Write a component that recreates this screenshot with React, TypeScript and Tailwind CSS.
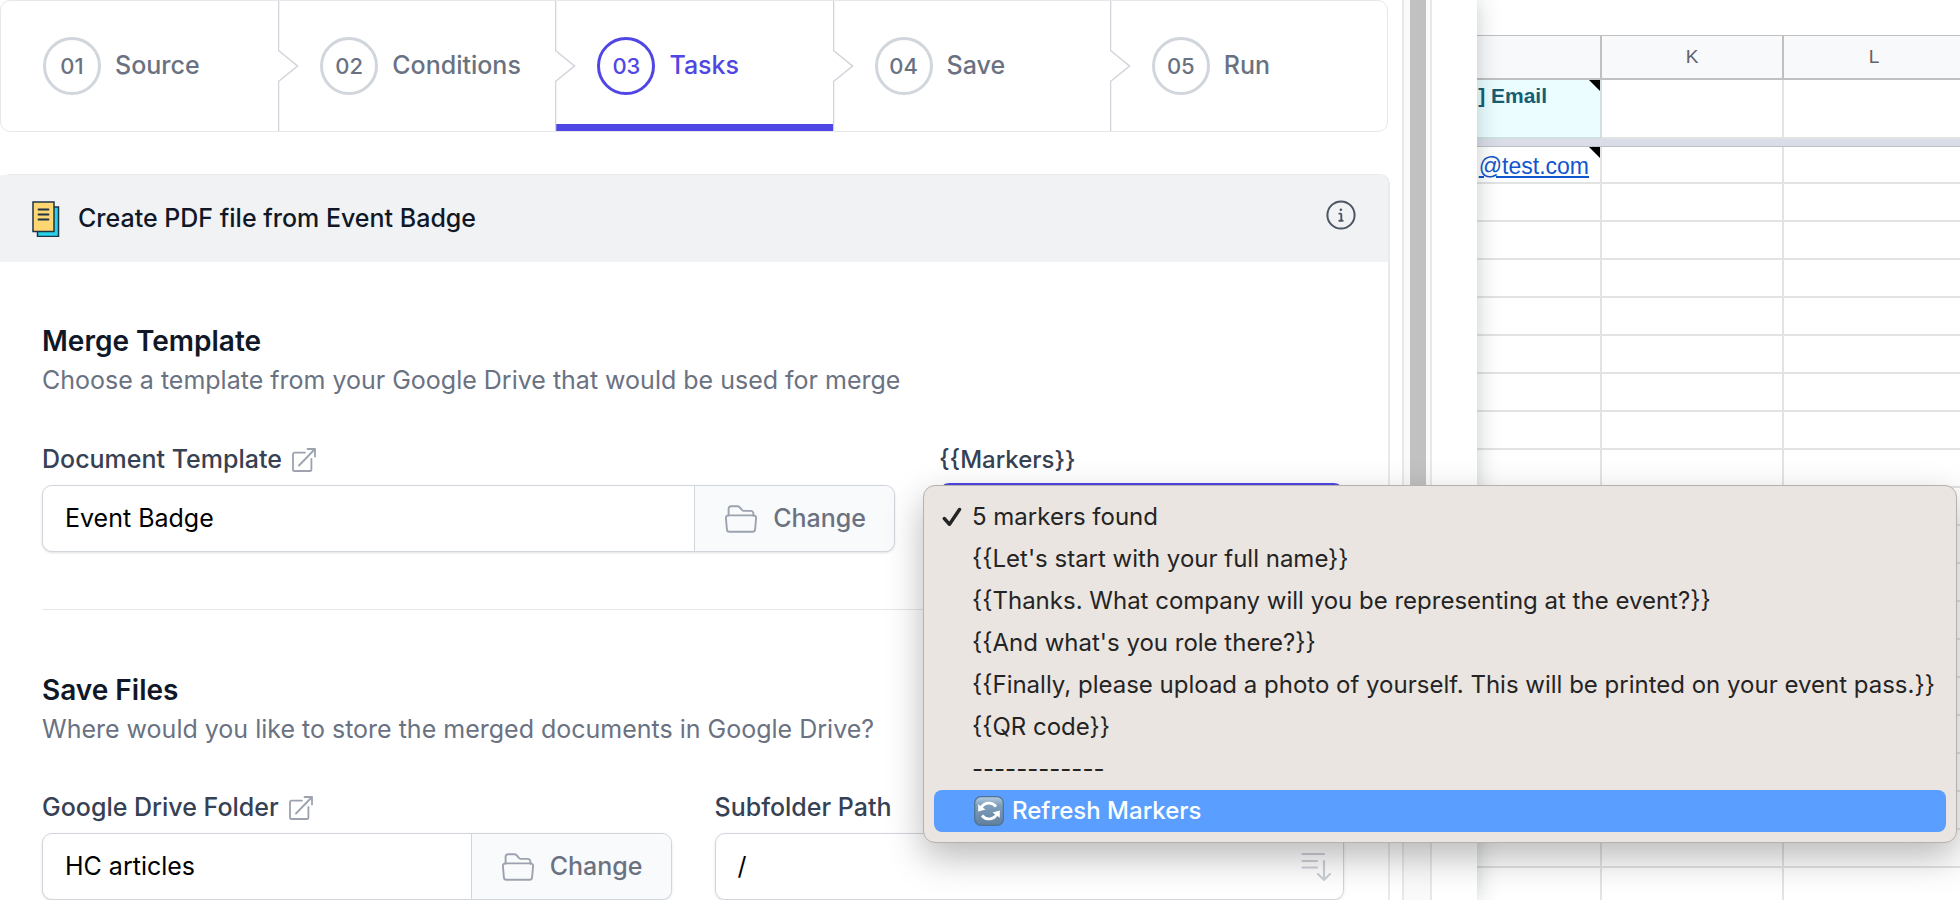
import React from 'react';

const steps = [
  { id: '01', name: 'Source' },
  { id: '02', name: 'Conditions' },
  { id: '03', name: 'Tasks', current: true },
  { id: '04', name: 'Save' },
  { id: '05', name: 'Run' },
];

const markers = [
  '5 markers found',
  "{{Let's start with your full name}}",
  '{{Thanks. What company will you be representing at the event?}}',
  "{{And what's you role there?}}",
  '{{Finally, please upload a photo of yourself. This will be printed on your event pass.}}',
  '{{QR code}}',
  '------------',
];

const emptyRows = Array.from({ length: 20 }, (_, i) => i);

/* Icons */

const DocumentIcon = () => (
  <svg className="h-9 w-7" viewBox="0 0 28 36" fill="none" stroke="#1f3347" strokeWidth="1.5" aria-hidden="true">
    <rect x="5.5" y="6" width="21" height="29.5" fill="#26d3ea" />
    <rect x="1" y="1" width="21" height="29.5" fill="#ffd772" />
    <path d="M6.5 8.5h10M6.5 13.5h10M6.5 18.5h10" strokeLinecap="round" strokeWidth="1.8" />
  </svg>
);

const InfoIcon = () => (
  <svg className="h-[30px] w-[30px]" viewBox="0 0 30 30" fill="none" stroke="#4b5563" aria-hidden="true">
    <circle cx="15" cy="15" r="13.6" strokeWidth="2" />
    <path d="M13.3 13.6h1.3c.4 0 .7.3.7.7v5c0 1 .5 1.5 1.4 1.5M13.3 20.8h3.4" strokeWidth="1.9" strokeLinecap="round" />
    <circle cx="14.9" cy="9.7" r="1.3" fill="#4b5563" stroke="none" />
  </svg>
);

const ExternalIcon = () => (
  <svg className="h-6 w-6" viewBox="0 0 24 24" fill="none" stroke="#9ca3af" strokeWidth="1.8" strokeLinecap="round" strokeLinejoin="round" aria-hidden="true">
    <path d="M13 4.6H2.6A1.6 1.6 0 0 0 1 6.2v15.2A1.6 1.6 0 0 0 2.6 23h15.2a1.6 1.6 0 0 0 1.6-1.6V11" />
    <path d="M15.5 1H23v7.5M23 1 7 17.5" />
  </svg>
);

const FolderIcon = () => (
  <svg className="h-7 w-8" viewBox="0 0 32 28" fill="none" stroke="#9ca3af" strokeWidth="1.9" strokeLinecap="round" strokeLinejoin="round" aria-hidden="true">
    <path d="M3.6 10.6V3.8A2.6 2.6 0 0 1 6.2 1.2h6.3c.8 0 1.5.3 2 .9l2.6 3c.5.5 1 .8 1.7.8h7a2.6 2.6 0 0 1 2.6 2.6v2.2" />
    <path d="M3.4 10.4h25.2c1.5 0 2.6 1.2 2.5 2.6l-1 11.4a2.6 2.6 0 0 1-2.6 2.4h-23a2.6 2.6 0 0 1-2.6-2.4L.9 13c-.1-1.4 1-2.6 2.5-2.6Z" />
  </svg>
);

const SortIcon = () => (
  <svg className="h-[30px] w-[30px]" viewBox="0 0 30 30" fill="none" stroke="#cdd0d7" strokeWidth="2.2" strokeLinecap="round" strokeLinejoin="round" aria-hidden="true">
    <path d="M1.5 2H23M1.5 9H16M1.5 15.5H16M23 9v18.5M17 22l6 6 6-6" />
  </svg>
);

const CheckIcon = () => (
  <svg className="h-5 w-5" viewBox="0 0 20 20" fill="none" stroke="#242424" strokeWidth="3.4" strokeLinecap="round" strokeLinejoin="round" aria-hidden="true">
    <path d="M2.3 11.5 7.5 17.3 17.5 2.5" />
  </svg>
);

const RefreshIcon = () => (
  <svg className="h-[30px] w-[30px]" viewBox="0 0 30 30" fill="none" aria-hidden="true">
    <defs>
      <linearGradient id="refresh-face" x1="0" y1="0" x2="0" y2="1">
        <stop offset="0" stopColor="#b4cde2" />
        <stop offset="0.3" stopColor="#7f9fbc" />
        <stop offset="1" stopColor="#5f7f9c" />
      </linearGradient>
    </defs>
    <rect x="0.7" y="0.7" width="28.6" height="28.6" rx="6" fill="url(#refresh-face)" stroke="#4f7394" strokeWidth="1.2" />
    <path d="M7 12.5C9.2 6.6 17.5 5 22 10.5M23 17.5C20.8 23.4 12.5 25 8 19.5" stroke="#fff" strokeWidth="2.8" />
    <path d="M4.2 8.2V15.5L11.5 13.5ZM25.8 21.8V14.5L18.5 16.5Z" fill="#fff" />
  </svg>
);

const NoteCorner = () => (
  <svg className="absolute top-0 right-0 h-[11px] w-[11px]" viewBox="0 0 11 11" aria-hidden="true">
    <path d="M0 0h11v11Z" fill="#000" />
  </svg>
);

/* Form parts */

interface SectionTitleProps {
  title: string;
  hint: string;
}

const SectionTitle: React.FC<SectionTitleProps> = ({ title, hint }) => (
  <div>
    <h2 className="text-[28px] leading-10 font-semibold text-gray-900">{title}</h2>
    <p className="text-[25px] leading-[38px] text-gray-500">{hint}</p>
  </div>
);

interface PickerProps {
  id: string;
  label: string;
  value: string;
  className: string;
}

const Picker: React.FC<PickerProps> = ({ id, label, value, className }) => (
  <div className={className}>
    <div className="flex h-10 items-center gap-2.5">
      <label htmlFor={id} className="text-[25px] font-medium text-gray-700">{label}</label>
      <a href="#open" aria-label={`Open ${label}`}><ExternalIcon /></a>
    </div>
    <div className="mt-[5px] flex h-[67px] overflow-hidden rounded-[10px] border border-gray-300 bg-white shadow-sm">
      <input id={id} defaultValue={value} className="min-w-0 flex-1 px-[22px] text-[25px] text-black outline-none" />
      <button className="flex items-center gap-4 border-l border-gray-300 bg-gray-50 pr-7 pl-[30px] text-[25px] font-medium text-gray-500">
        <FolderIcon />
        Change
      </button>
    </div>
  </div>
);

const Steps = () => (
  <nav aria-label="Progress" className="mr-0.5">
    <ol className="flex h-[132px] rounded-[10px] border border-gray-200">
      {steps.map((step, i) => (
        <li key={step.id} className="relative flex-1">
          <a href={`#${step.name}`} className="flex h-full items-center gap-[14px] pl-[42px]">
            <span
              className={`flex h-[58px] w-[58px] items-center justify-center rounded-full border-3 text-[22px] font-medium ${
                step.current ? 'border-[#4f46e5] text-[#4f46e5]' : 'border-gray-300 text-gray-500'
              }`}
            >
              {step.id}
            </span>
            <span className={`text-[25px] font-medium ${step.current ? 'text-[#4f46e5]' : 'text-gray-500'}`}>{step.name}</span>
          </a>
          {step.current && <span className="absolute inset-x-0 bottom-0 ml-px h-[7px] bg-[#4f46e5]" />}
          {i > 0 && (
            <svg className="absolute inset-y-0 left-0 h-full w-6" viewBox="0 0 24 130" fill="none" preserveAspectRatio="none" aria-hidden="true">
              <path d="M.5 0V49.5L19.5 65 .5 80.5V130" stroke="#d1d5db" strokeWidth="1.6" />
            </svg>
          )}
        </li>
      ))}
    </ol>
  </nav>
);

const MarkersMenu = () => (
  <ul
    role="listbox"
    aria-label="Markers"
    className="absolute top-0.5 -left-4 z-20 w-[1034px] rounded-xl border border-[#b5b1ae] bg-[#eae5e1] p-2.5 text-2xl whitespace-nowrap text-[#242424] shadow-[0_14px_36px_rgba(0,0,0,0.28)]"
  >
    {markers.map((marker, i) => (
      <li key={marker} role="option" aria-selected={i === 0} className="flex h-[42px] items-center pl-2">
        <span className="w-[30px]">{i === 0 && <CheckIcon />}</span>
        {marker}
      </li>
    ))}
    <li role="option" aria-selected={false} className="flex h-[42px] items-center gap-2 rounded-lg bg-[#5a9fff] pl-10 font-medium text-white">
      <RefreshIcon />
      Refresh Markers
    </li>
  </ul>
);

const Sheet = () => (
  <section className="w-[483px] shrink-0 overflow-hidden bg-white pt-[35px] font-['Liberation_Sans',Arial,sans-serif]">
    <table className="w-[489px] table-fixed border-separate border-spacing-0">
      <colgroup>
        <col className="w-[125px]" />
        <col className="w-[182px]" />
        <col className="w-[182px]" />
      </colgroup>
      <thead>
        <tr className="h-[45px] bg-[#f8f9fb] text-[19px] text-[#5f6368]">
          {['', 'K', 'L'].map((col) => (
            <th key={col} scope="col" className="border-t border-r-2 border-b-2 border-[#c0c0c0] p-0 font-normal">{col}</th>
          ))}
        </tr>
      </thead>
      <tbody>
        <tr className="h-[59px]">
          <td className="relative border-r-2 border-b-2 border-[#d0e0e2] bg-[#ebfdff] p-0 pt-0.5 align-top text-[21px] leading-7 font-bold text-[#155e75]">
            <span className="flex justify-end pr-[53px] whitespace-nowrap">] Email</span>
            <NoteCorner />
          </td>
          <td className="border-r-2 border-b-2 border-[#e2e3e3] p-0" />
          <td className="border-r-2 border-b-2 border-[#e2e3e3] p-0" />
        </tr>
        <tr className="h-2">
          <td colSpan={3} className="h-2 border-b border-[#c0c0c0] bg-[#dadde8] p-0" />
        </tr>
        {emptyRows.map((row) => (
          <tr key={row} className={row === 0 ? 'h-[37px]' : 'h-[38px]'}>
            <td className="relative border-r-2 border-b-2 border-[#e2e3e3] p-0">
              {row === 0 && (
                <>
                  <a href="mailto:@test.com" className="flex justify-end pt-[3px] pr-[11px] text-[23px] leading-8 text-[#1155cc] underline decoration-2 underline-offset-2">@test.com</a>
                  <NoteCorner />
                </>
              )}
            </td>
            <td className="border-r-2 border-b-2 border-[#e2e3e3] p-0" />
            <td className="border-r-2 border-b-2 border-[#e2e3e3] p-0" />
          </tr>
        ))}
      </tbody>
    </table>
  </section>
);

export default function App() {
  return (
    <div className="flex h-screen overflow-hidden bg-white font-[Inter,sans-serif]">
      {/* Dialog */}
      <div className="relative z-10 flex min-w-0 flex-1 bg-white pr-[45px] shadow-[0_0_22px_rgba(20,40,40,0.24)]">
        <main className="min-w-0 flex-1 pr-3">
          <Steps />

          <div className="mt-[42px] min-h-screen rounded-t-[10px] border-t border-r-2 border-[#e9eaec]">
            <header className="flex h-[87px] items-center justify-between rounded-tr-lg bg-[#f1f2f4] pr-8 pl-8">
              <div className="flex items-center gap-[18px]">
                <DocumentIcon />
                <h1 className="text-[25px] font-medium text-gray-900">Create PDF file from Event Badge</h1>
              </div>
              <button aria-label="Info" className="pb-2"><InfoIcon /></button>
            </header>

            <div className="pr-[44px] pl-[42px]">
              <section className="border-b border-gray-200 pt-[59px] pb-[56px]">
                <SectionTitle title="Merge Template" hint="Choose a template from your Google Drive that would be used for merge" />
                <div className="mt-[41px] flex gap-11">
                  <Picker id="template" label="Document Template" value="Event Badge" className="min-w-0 flex-1" />
                  <div className="w-[405px] shrink-0">
                    <div className="flex h-10 items-center">
                      <label htmlFor="markers" className="text-2xl font-medium text-gray-700">{'{{Markers}}'}</label>
                    </div>
                    <div className="relative mt-[3px]">
                      <select id="markers" className="h-[70px] w-full rounded-[10px] border-3 border-[#4f46e5] px-5 text-2xl">
                        <option>5 markers found</option>
                      </select>
                      <MarkersMenu />
                    </div>
                  </div>
                </div>
              </section>

              <section className="pt-[60px]">
                <SectionTitle title="Save Files" hint="Where would you like to store the merged documents in Google Drive?" />
                <div className="mt-[40px] flex gap-[43px]">
                  <Picker id="folder" label="Google Drive Folder" value="HC articles" className="min-w-0 flex-1" />
                  <div className="min-w-0 flex-1">
                    <div className="flex h-10 items-center">
                      <label htmlFor="subfolder" className="text-[25px] font-medium text-gray-700">Subfolder Path</label>
                    </div>
                    <div className="mt-[5px] flex h-[67px] items-center rounded-[10px] border border-gray-300 pr-3 shadow-sm">
                      <input id="subfolder" defaultValue="/" className="min-w-0 flex-1 px-[22px] text-[25px] text-black outline-none" />
                      <SortIcon />
                    </div>
                  </div>
                </div>
              </section>
            </div>
          </div>
        </main>

        {/* Scrollbar */}
        <div className="w-[30px] border-x-2 border-[#e8e8e8] bg-[#fafafa] pl-1.5">
          <div className="h-3/5 w-4 bg-[#c1c1c1]" />
        </div>
      </div>

      <Sheet />
    </div>
  );
}
